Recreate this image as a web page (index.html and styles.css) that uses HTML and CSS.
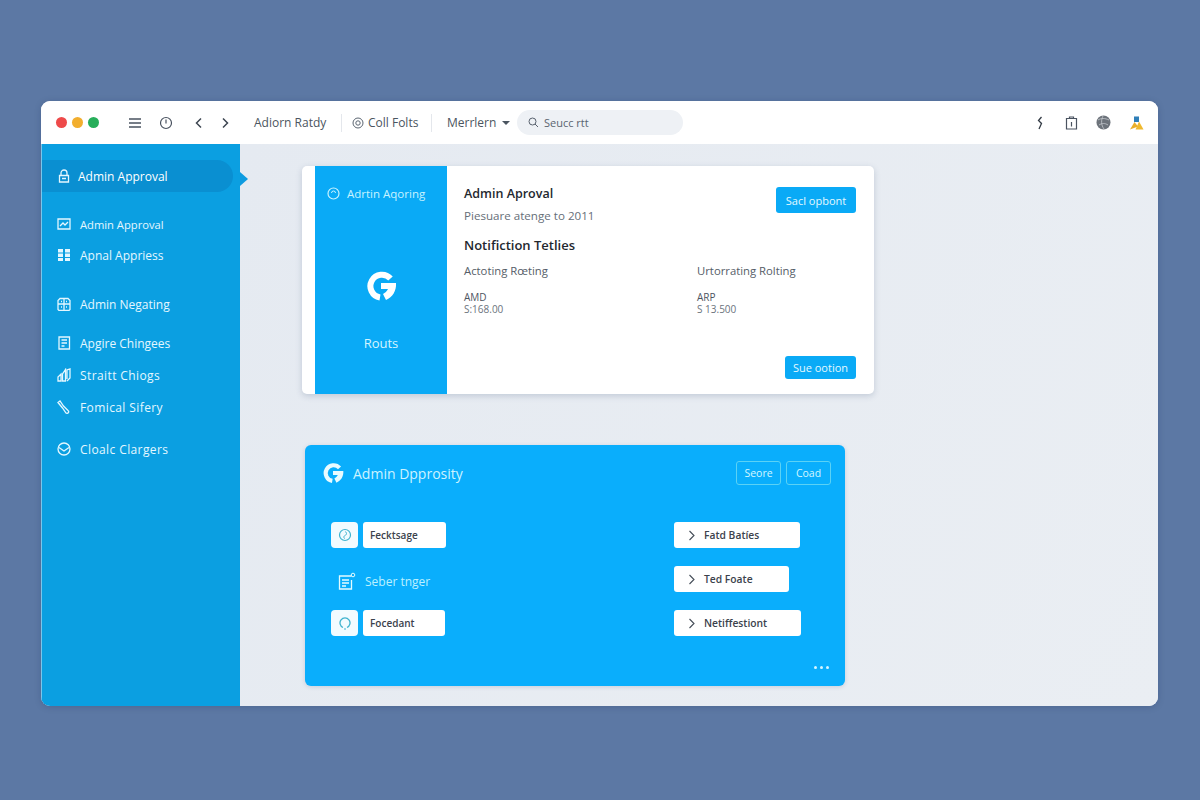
FILE: index.html
```html
<!DOCTYPE html>
<html lang="en">
<head>
    <meta charset="UTF-8">
    <meta name="viewport" content="width=device-width, initial-scale=1.0">
    <title>Admin Approval</title>
    <link rel="stylesheet" href="styles.css">
</head>
<body>

<div class="window">
    <header class="topbar">
        <div class="dots">
            <span class="dot red"></span>
            <span class="dot yellow"></span>
            <span class="dot green"></span>
        </div>
        <svg class="tool tool-menu" width="14" height="12" viewBox="0 0 14 12"><path d="M1 2h12M1 6h12M1 10h12" stroke="#4a5360" stroke-width="1.5" fill="none"/></svg>
        <svg class="tool tool-clock" width="14" height="14" viewBox="0 0 14 14"><circle cx="7" cy="7" r="5.5" stroke="#4a5360" stroke-width="1.2" fill="none"/><path d="M7 3.5V7.5" stroke="#4a5360" stroke-width="1.2"/></svg>
        <svg class="tool tool-back" width="9" height="12" viewBox="0 0 9 12"><path d="M7 1.5 2.5 6 7 10.5" stroke="#3d4651" stroke-width="1.5" fill="none"/></svg>
        <svg class="tool tool-next" width="9" height="12" viewBox="0 0 9 12"><path d="M2 1.5 6.500 6 2 10.500" stroke="#3d4651" stroke-width="1.500" fill="none"/></svg>
        <span class="top-link first-link">Adiorn Ratdy</span>
        <span class="sep"></span>
        <span class="top-link at-link">
            <svg width="12" height="12" viewBox="0 0 12 12"><circle cx="6" cy="6" r="5" stroke="#5a6470" fill="none"/><circle cx="6" cy="6" r="2.200" stroke="#5a6470" fill="none"/></svg>
            Coll Folts
        </span>
        <span class="sep"></span>
        <span class="top-link menu-link">Merrlern <i class="caret"></i></span>
        <div class="search">
            <svg width="11" height="11" viewBox="0 0 11 11"><circle cx="4.500" cy="4.500" r="3.500" stroke="#59626e" fill="none"/><path d="M7 7l3 3" stroke="#59626e"/></svg>
            <span>Seucc rtt</span>
        </div>
        <div class="top-right">
            <svg class="top-first" width="8" height="14" viewBox="0 0 8 14"><path d="M5.500 1 2.500 4.500 5.500 7.500 3 13" stroke="#333b45" stroke-width="1.300" fill="none"/></svg>
            <svg width="13" height="14" viewBox="0 0 13 14"><path d="M1.500 2.500h10v10.500h-10zM4.500 2.500V1h4v1.500M6.500 6v4.500" stroke="#4a5360" stroke-width="1.200" fill="none"/></svg>
            <svg width="15" height="15" viewBox="0 0 15 15"><circle cx="7.500" cy="7.500" r="7" fill="#6d737b"/><path d="M2 5c3 -2 7 -2 11 0M3 10c3-2 6-2 9 0M7 1c-2 4-2 9 1 13" stroke="#c8ccd1" stroke-width=".8" fill="none"/></svg>
            <svg width="15" height="14" viewBox="0 0 15 14"><path d="M5 .5h5v5.500H5z" fill="#2f7fb8"/><path d="M5.500 6 9 10.500 1 13.500z" fill="#e9ae2a"/><path d="M10 5.500 14.500 13.500H6.500z" fill="#efb92f"/></svg>
        </div>
    </header>

    <div class="body-row">
        <nav class="sidebar">
            <a class="nav-item active">
                <svg viewBox="0 0 14 14"><path d="M4 6V4a3 3 0 0 1 6 0v2M2.500 6.500h9v6.500h-9zM5 9.500h4" /></svg>
                Admin Approval
            </a>
            <a class="nav-item item-a">
                <svg viewBox="0 0 14 14"><path d="M1 2h12v10H1zM3 9l3-3 2 2 3-3" /></svg>
                Admin Approval
            </a>
            <a class="nav-item item-b">
                <svg viewBox="0 0 14 14"><path class="solid" d="M1 1h5v3.500H1zM8 1h5v3.500H8zM1 5.500h5V9H1zM8 5.500h5V9H8zM1 10h5v3H1zM8 10h5v3H8z" /></svg>
                Apnal Appriess
            </a>
            <a class="nav-item item-c">
                <svg viewBox="0 0 14 14"><path d="M3 1.500h8l2 2v9l-1 1H2l-1-1v-9zM1 7h12M7 1.500v12M4 4.500h1M9 4.500h1M4 10h1M9 10h1" /></svg>
                Admin Negating
            </a>
            <a class="nav-item item-d">
                <svg viewBox="0 0 14 14"><path d="M2 1h10.500v12H2zM4.500 4h5.500M4.500 7h5.500M4.500 10h3" /></svg>
                Apgire Chingees
            </a>
            <a class="nav-item item-e">
                <svg viewBox="0 0 14 14"><path d="M1 13V9l3-3v7zM5.500 13V6l3-4.500V13zM10 11V2l3-1v9l-3 3" /></svg>
                Straitt Chiogs
            </a>
            <a class="nav-item item-e">
                <svg viewBox="0 0 14 14"><path d="M1 2.500 3 1l3.500 5L11 10.500a1.500 1.500 0 0 1-2 2.500L5.500 8z" /></svg>
                Fomical Sifery
            </a>
            <a class="nav-item item-f">
                <svg viewBox="0 0 14 14"><circle cx="7" cy="7" r="6" /><path d="M2 5.500 7 9l5-3.500" /></svg>
                Cloalc Clargers
            </a>
        </nav>

        <main class="content">
            <section class="info-card">
                <div class="info-side">
                    <div class="side-head">
                        <svg width="13" height="13" viewBox="0 0 13 13"><circle cx="6.500" cy="6.500" r="5.500" stroke="#c8f3ff" stroke-width="1.200" fill="none"/><path d="M4.500 6a2 2 0 0 1 4 0" stroke="#c8f3ff" fill="none"/></svg>
                        Adrtin Aqoring
                    </div>
                    <svg class="logo-big" width="32" height="32" viewBox="0 0 32 32"><path d="M25.500 8.500A11.500 11.500 0 1 0 15 27.500" stroke="#fff" stroke-width="6" fill="none"/><path d="M16 13h15c.6 8-3.500 14-10 17l-3-6c2-1 4-3 5-5h-7z" fill="#fff"/></svg>
                    <div class="side-foot">Routs</div>
                </div>
                <div class="info-main">
                    <div class="info-top">
                        <div>
                            <h3>Admin Aproval</h3>
                            <p class="muted">Piesuare atenge to 2011</p>
                        </div>
                        <button class="btn btn-send">Sacl opbont</button>
                    </div>
                    <h3 class="notif-title">Notifiction Tetlies</h3>
                    <div class="routes">
                        <div>
                            <p class="route-name">Actoting Rœting</p>
                            <p class="route-code">AMD</p>
                            <p class="route-price">S:168.00</p>
                        </div>
                        <div>
                            <p class="route-name">Urtorrating Rolting</p>
                            <p class="route-code">ARP</p>
                            <p class="route-price">S 13.500</p>
                        </div>
                    </div>
                    <div class="info-foot">
                        <button class="btn btn-see">Sue ootion</button>
                    </div>
                </div>
            </section>

            <section class="blue-card">
                <div class="blue-head">
                    <svg width="22" height="22" viewBox="0 0 32 32"><path d="M25.500 8.500A11.500 11.500 0 1 0 15 27.500" stroke="#e9fbff" stroke-width="6" fill="none"/><path d="M16 13h15c.6 8-3.500 14-10 17l-3-6c2-1 4-3 5-5h-7z" fill="#e9fbff"/></svg>
                    <span class="blue-title">Admin Dpprosity</span>
                    <div class="blue-actions">
                        <button class="ghost">Seore</button>
                        <button class="ghost">Coad</button>
                    </div>
                </div>
                <div class="blue-rows">
                    <div class="left-col">
                        <div class="row">
                            <span class="icon-box"><svg width="14" height="16" viewBox="0 0 14 16"><circle cx="7" cy="8" r="5.500" stroke="#3fb3cf" stroke-width="1.200" fill="none"/><path d="M7 4.500c2 1 2 3 0 4s-1 3 0 3" stroke="#3fb3cf" fill="none"/></svg></span>
                            <span class="label label-a">Fecktsage</span>
                        </div>
                        <div class="row row-plain">
                            <svg width="18" height="18" viewBox="0 0 18 18"><path d="M13.500 4H1.500v13h12V8M4 8h7M4 11h7M4 14h4" stroke="#e3fbff" stroke-width="1.300" fill="none"/><circle cx="15" cy="3" r="1.800" stroke="#e3fbff" fill="none"/></svg>
                            <span class="plain-text">Seber tnger</span>
                        </div>
                        <div class="row">
                            <span class="icon-box"><svg width="12" height="14" viewBox="0 0 12 14"><path d="M4 11.500a5 5 0 1 1 4 0" stroke="#3fb3cf" stroke-width="1.300" fill="none"/><path d="M5 13h2" stroke="#3fb3cf"/></svg></span>
                            <span class="label label-c">Focedant</span>
                        </div>
                    </div>
                    <div class="right-col">
                        <div class="chev-row chev-a">
                            <svg width="7" height="11" viewBox="0 0 7 11"><path d="M1.500 1 6 5.500 1.500 10" stroke="#444c57" stroke-width="1.100" fill="none"/></svg>
                            Fatd Batíes
                        </div>
                        <div class="chev-row chev-b">
                            <svg width="7" height="11" viewBox="0 0 7 11"><path d="M1.500 1 6 5.500 1.500 10" stroke="#444c57" stroke-width="1.100" fill="none"/></svg>
                            Ted Foate
                        </div>
                        <div class="chev-row chev-c">
                            <svg width="7" height="11" viewBox="0 0 7 11"><path d="M1.500 1 6 5.500 1.500 10" stroke="#444c57" stroke-width="1.100" fill="none"/></svg>
                            Netiffestiont
                        </div>
                    </div>
                </div>
                <div class="more">
                    <i></i><i></i><i></i>
                </div>
            </section>
        </main>
    </div>
</div>

</body>
</html>
```

FILE: styles.css
```css
/* Page and window frame */
* {
    box-sizing: border-box;
}
body {
    margin: 0;
    height: 800px;
    padding: 101px 42px 94px 41px;
    background: #5c78a4;
    font-family: "Open Sans", "Noto Sans", sans-serif;
    overflow: hidden;
}
.window {
    height: 605px;
    display: flex;
    flex-direction: column;
    background: #e7ebf2;
    border-radius: 9px;
    overflow: hidden;
    box-shadow: 0 1px 6px rgba(30, 50, 90, 0.25);
}

/* Top bar */
.topbar {
    height: 43px;
    flex: none;
    display: flex;
    align-items: center;
    background: #fff;
    padding-left: 15px;
    color: #4b5560;
    font-size: 12px;
}
.dots {
    display: flex;
    gap: 5px;
}
.dot {
    width: 11px;
    height: 11px;
    border-radius: 50%;
}
.red { background: #ee4a4a; }
.yellow { background: #f2ae2e; }
.green { background: #27ae5a; }
.tool {
    flex: none;
}
.tool-menu { margin-left: 29px; }
.tool-clock { margin-left: 17px; }
.tool-back { margin-left: 21px; }
.tool-next { margin-left: 18px; }
.top-link {
    display: flex;
    align-items: center;
    white-space: nowrap;
}
.first-link { margin-left: 24px; width: 77px; }
.sep {
    width: 1px;
    height: 18px;
    background: #e4e7ec;
}
.first-link + .sep { margin-left: 10px; }
.at-link {
    gap: 4px;
    margin-left: 10px;
    width: 79px;
}
.menu-link {
    margin-left: 15px;
    gap: 6px;
    width: 70px;
}
.caret {
    width: 0;
    height: 0;
    border-left: 4px solid transparent;
    border-right: 4px solid transparent;
    border-top: 4px solid #4b5560;
}
.search {
    width: 166px;
    height: 25px;
    border-radius: 13px;
    background: #eef1f5;
    display: flex;
    align-items: center;
    gap: 5px;
    padding-left: 11px;
    font-size: 11px;
    color: #5a6470;
}
.top-right {
    margin-left: auto;
    padding-right: 14px;
    display: flex;
    align-items: center;
    gap: 18px;
}
.top-first {
    margin-right: 3px;
}

/* Sidebar */
.body-row {
    flex: 1;
    display: flex;
    min-height: 0;
}
.sidebar {
    width: 199px;
    flex: none;
    background: #0b9fe1;
    border-left: 1px solid #7cc6ea;
    padding-top: 16px;
    display: flex;
    flex-direction: column;
    color: #e4f7ff;
    position: relative;
}
.sidebar::after {
    content: "";
    position: absolute;
    right: -8px;
    top: 28px;
    border-left: 8px solid #0d9be0;
    border-top: 7px solid transparent;
    border-bottom: 7px solid transparent;
}
.nav-item {
    display: flex;
    align-items: center;
    gap: 9px;
    height: 20px;
    padding-left: 15px;
    font-size: 12px;
    white-space: nowrap;
}
.nav-item svg {
    width: 14px;
    height: 14px;
    flex: none;
    stroke: #e4f7ff;
    stroke-width: 1.3;
    fill: none;
}
.nav-item .solid {
    fill: #e4f7ff;
    stroke: none;
}
.active {
    height: 32px;
    width: 191px;
    background: #0a8fd1;
    border-radius: 0 16px 16px 0;
    padding-left: 15px;
    gap: 7px;
    color: #fff;
    font-size: 12px;
}
.item-a {
    margin-top: 22px;
    font-size: 11.2px;
}
.item-b { margin-top: 11px; }
.item-c { margin-top: 29px; }
.item-d { margin-top: 19px; }
.item-e {
    margin-top: 12px;
    letter-spacing: 0.4px;
}
.item-f {
    margin-top: 22px;
    letter-spacing: 0.4px;
}

/* Main area */
.content {
    flex: 1;
    padding: 22px 0 0 62px;
    background: linear-gradient(120deg, #e5eaf1, #eaeef3);
}

/* White info card */
.info-card {
    width: 572px;
    height: 228px;
    display: flex;
    background: #fff;
    border-radius: 5px;
    padding-left: 13px;
    box-shadow: 0 2px 6px rgba(60, 80, 120, 0.22);
}
.info-side {
    width: 132px;
    flex: none;
    background: #0aaaf6;
    display: flex;
    flex-direction: column;
    align-items: center;
    color: #c8f3ff;
}
.side-head {
    align-self: flex-start;
    padding-left: 12px;
    display: flex;
    align-items: center;
    gap: 7px;
    font-size: 11.5px;
    margin-top: 19px;
    height: 17px;
    white-space: nowrap;
}
.logo-big {
    margin-top: 68px;
}
.side-foot {
    margin-top: 32px;
    font-size: 13px;
    color: #d5f5ff;
}
.info-main {
    flex: 1;
    padding: 19px 18px 15px 17px;
    display: flex;
    flex-direction: column;
}
.info-top {
    display: flex;
    justify-content: space-between;
    align-items: flex-start;
}
h3 {
    margin: 0;
    font-size: 12.5px;
    line-height: 17px;
    font-weight: 600;
    color: #23282f;
}
p {
    margin: 0;
}
.muted {
    margin-top: 6px;
    font-size: 11.6px;
    line-height: 16px;
    color: #666e78;
}
.btn {
    border: none;
    border-radius: 3px;
    background: #0aaaf6;
    color: #e4f9ff;
    font: 11px "Open Sans", sans-serif;
    padding: 0;
}
.btn-send {
    width: 80px;
    height: 26px;
    margin-top: 2px;
}
.notif-title {
    margin-top: 13px;
    font-size: 13px;
}
.routes {
    display: grid;
    grid-template-columns: 233px 1fr;
    margin-top: 9px;
}
.route-name {
    font-size: 11.3px;
    line-height: 16px;
    color: #555d67;
}
.route-code {
    margin-top: 12px;
    font-size: 10px;
    line-height: 12px;
    color: #4d555f;
}
.route-price {
    font-size: 10px;
    line-height: 12px;
    color: #6b737d;
}
.info-foot {
    margin-top: auto;
    display: flex;
    justify-content: flex-end;
}
.btn-see {
    width: 71px;
    height: 23px;
}

/* Blue card */
.blue-card {
    width: 540px;
    height: 241px;
    margin: 51px 0 0 3px;
    padding: 16px 14px 0 17px;
    background: #0aaefc;
    border-radius: 6px;
    box-shadow: 0 1px 4px rgba(60, 80, 120, 0.18);
    position: relative;
}
.blue-head {
    display: flex;
    align-items: center;
    height: 24px;
}
.blue-title {
    margin-left: 9px;
    font-size: 14px;
    color: #cdf3ff;
}
.blue-actions {
    margin-left: auto;
    display: flex;
    gap: 5px;
}
.ghost {
    width: 45px;
    height: 24px;
    padding: 0;
    background: transparent;
    border: 1px solid #5bd2f5;
    border-radius: 3px;
    color: #d4f7ff;
    font: 10.5px "Open Sans", sans-serif;
}
.blue-rows {
    display: grid;
    grid-template-columns: 343px 1fr;
    margin: 37px 0 0 9px;
}
.left-col, .right-col {
    display: flex;
    flex-direction: column;
    gap: 18px;
    align-items: flex-start;
}
.row {
    display: flex;
    align-items: center;
    gap: 5px;
    height: 26px;
}
.row-plain {
    gap: 9px;
    padding-left: 7px;
    position: relative;
    top: 2px;
}
.icon-box {
    width: 27px;
    height: 26px;
    background: #f2fbff;
    border-radius: 4px;
    display: flex;
    align-items: center;
    justify-content: center;
}
.label {
    height: 26px;
    background: #fff;
    border-radius: 3px;
    padding-left: 7px;
    display: flex;
    align-items: center;
    font-size: 10px;
    font-weight: 600;
    color: #3b424c;
}
.label-a { width: 83px; }
.label-c { width: 82px; }
.plain-text {
    font-size: 12px;
    color: #bdf1ff;
}
.chev-row {
    height: 26px;
    background: #fff;
    border-radius: 3px;
    display: flex;
    align-items: center;
    gap: 9px;
    padding-left: 14px;
    font-size: 10.3px;
    font-weight: 600;
    color: #3b424c;
}
.chev-a { width: 126px; }
.chev-b { width: 115px; }
.chev-c { width: 127px; }
.more {
    position: absolute;
    right: 16px;
    bottom: 17px;
    display: flex;
    gap: 3px;
}
.more i {
    width: 3px;
    height: 3px;
    border-radius: 50%;
    background: #d6f5ff;
}
```
